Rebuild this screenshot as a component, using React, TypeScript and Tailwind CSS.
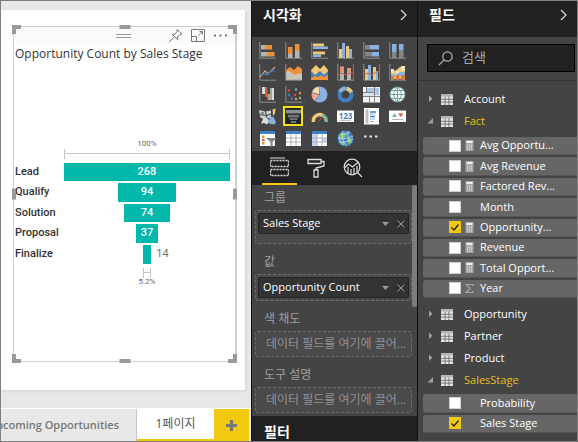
import type { ReactNode } from "react";
import clsx from "clsx";

const OR = "#ee8f3a";
const GR = "#b4b4b4";
const DG = "#858585";
const BL = "#8ab0de";
const DB = "#3f7fc4";
const YE = "#f0c878";
const RE = "#d9553f";
const TE = "#7db795";

function Axes() {
  return <path d="M.8 0V16.2H17" fill="none" stroke="#8f8f8f" strokeWidth="1" />;
}

function Globe({ fill, line }: { fill: string; line: string }) {
  return (
    <>
      <circle cx="8.5" cy="8.5" r="7.6" fill={fill} stroke={line} strokeWidth=".8" />
      <path d="M1 8.5h15M8.5 1v15M2.5 4.6h12M2.5 12.4h12M8.5 1c-5 4.5-5 10.500 0 15M8.500 1c5 4.500 5 10.500 0 15" fill="none" stroke={line} strokeWidth=".9" />
    </>
  );
}

function Sheet({ tint }: { tint?: boolean }) {
  return (
    <>
      <path d="M1 1h15v15H1z" fill="#fff" />
      <path d="M1 1h15v3H1z" fill={DB} />
      {tint && <path d="M1 4h5v12H1zM11 8h5v4h-5z" fill="#c3d9f0" />}
      <path d="M6 4v12M11 4v12M1 8h15M1 12h15" stroke="#a9a9a9" strokeWidth=".9" />
    </>
  );
}

const visuals: { name: string; art: ReactNode; selected?: boolean }[] = [
  {
    name: "Stacked bar chart",
    art: (
      <>
        <Axes />
        <path d="M2 3h4v4.500H2zM2 10h6v4.500H2z" fill={GR} />
        <path d="M6 3h7v4.500H6zM8 10h7.500v4.500H8z" fill={OR} />
      </>
    ),
  },
  {
    name: "Stacked column chart",
    art: (
      <>
        <Axes />
        <path d="M3 12h4.500v4H3zM10 9h4.500v7H10z" fill={GR} />
        <path d="M3 5h4.500v7H3zM10 2h4.500v7H10z" fill={OR} />
      </>
    ),
  },
  {
    name: "Clustered bar chart",
    art: (
      <>
        <Axes />
        <path d="M2 1.500h11v3H2zM2 9.500h12v3H2z" fill={YE} />
        <path d="M2 4.500h15v2.500H2zM2 12.500h8v2.500H2z" fill={BL} />
      </>
    ),
  },
  {
    name: "Clustered column chart",
    art: (
      <>
        <Axes />
        <path d="M2 7h3v9H2zM9 4h3v12H9z" fill={YE} />
        <path d="M5 1h3v15H5zM12 7h3v9h-3z" fill={BL} />
      </>
    ),
  },
  {
    name: "100% stacked bar chart",
    art: (
      <>
        <Axes />
        <path d="M2 3h5v4.500H2zM2 10h7v4.500H2z" fill={DG} />
        <path d="M7 3h9v4.500H7zM9 10h7v4.500H9z" fill={BL} />
      </>
    ),
  },
  {
    name: "100% stacked column chart",
    art: (
      <>
        <Axes />
        <path d="M3 10h4.500v6H3zM10 8h4.500v8H10z" fill={DG} />
        <path d="M3 2h4.500v8H3zM10 2h4.500v6H10z" fill={BL} />
      </>
    ),
  },
  {
    name: "Line chart",
    art: (
      <>
        <Axes />
        <path d="M1 13l5-6 3 3 7-7" fill="none" stroke="#d49a8b" strokeWidth="1.200" />
        <path d="M1 11l4-1 3 1 4-4h4" fill="none" stroke={DB} strokeWidth="1.200" />
      </>
    ),
  },
  {
    name: "Area chart",
    art: (
      <>
        <path d="M1 6l4-3 4 3 4-4 4 3v11H1z" fill={OR} />
        <path d="M1 8l3-1 6 4 4-2 3 1v6H1z" fill="#c9c3b8" />
        <Axes />
      </>
    ),
  },
  {
    name: "Stacked area chart",
    art: (
      <>
        <path d="M0 6l5-5 4 4 4-4 4 5v6H0z" fill={YE} />
        <path d="M0 7l4 4 5-4 4 4 4-4v9H0z" fill={DB} />
        <path d="M0 14l4-2 3 1 3-2 3 2 4-2v5H0z" fill={OR} />
      </>
    ),
  },
  {
    name: "Line and stacked column chart",
    art: (
      <>
        <Axes />
        <path d="M3 8h4v8H3zM10 7h4v9h-4z" fill={GR} />
        <path d="M3 2.500h4V8H3zM10 4h4v4h-4z" fill="#e0956f" />
        <path d="M1 11l4-2 4 2 4-2h3M16.400 0v16" fill="none" stroke={RE} />
      </>
    ),
  },
  {
    name: "Line and clustered column chart",
    art: (
      <>
        <Axes />
        <path d="M2 5h3v11H2zM10 3h3v13h-3z" fill={YE} />
        <path d="M5 1h3v15H5zM13 7h2v9h-2z" fill={BL} />
        <path d="M1 11l4-2 4 2 4-3h3M16.400 0v16" fill="none" stroke="#c06a3b" />
      </>
    ),
  },
  {
    name: "Ribbon chart",
    art: (
      <>
        <path d="M2 5l4 2 5-4h5v12H2z" fill={YE} />
        <path d="M2 5h3v4H2zM7 7h3v4H7zM12 2h4v5h-4z" fill="#f8e6c2" />
        <path d="M2 9l4 2 5-3h5v3L9 13l-7-1z" fill={BL} />
        <path d="M2 12h3v4H2zM7 11h3v5H7zM12 11h4v5h-4z" fill="#e0753a" />
        <Axes />
      </>
    ),
  },
  {
    name: "Waterfall chart",
    art: (
      <>
        <Axes />
        <path d="M3 1h3v7H3zM13 2h2v12h-2z" fill="#dadada" />
        <path d="M6 1h2.500v10H6z" fill={RE} />
        <path d="M8.500 8H11v6H8.500z" fill="#e0956f" />
        <path d="M11 2h2v12h-2z" fill={TE} />
      </>
    ),
  },
  {
    name: "Scatter chart",
    art: (
      <>
        <Axes />
        <g fill={RE}><circle cx="4" cy="4.500" r="1.200" /><circle cx="10" cy="9" r="1.200" /></g>
        <g fill={TE}><circle cx="11" cy="3.500" r="1.200" /><circle cx="15" cy="12" r="1.200" /></g>
        <g fill={DB}><circle cx="4" cy="9" r="1.200" /><circle cx="7" cy="12.500" r="1.200" /></g>
        <g fill={OR}><circle cx="15" cy="7" r="1.200" /><circle cx="11" cy="13" r="1.200" /></g>
      </>
    ),
  },
  {
    name: "Pie chart",
    art: (
      <>
        <circle cx="8.500" cy="8.500" r="8" fill={BL} />
        <path d="M8.500 8.500L.8 6.500A8 8 0 0 0 4 15.100z" fill="#f0a898" stroke="#444" strokeWidth=".4" />
        <path d="M8.500 8.500L.8 6.500A8 8 0 0 1 8.500.5z" fill="#f3dcae" stroke="#444" strokeWidth=".4" />
      </>
    ),
  },
  {
    name: "Donut chart",
    art: (
      <>
        <circle cx="8.500" cy="8.500" r="6" fill="none" stroke={DB} strokeWidth="4" />
        <path d="M3 6a6 6 0 0 1 5.500-3.500" fill="none" stroke={BL} strokeWidth="4" />
        <path d="M9.500 2.600a6 6 0 0 1 4.600 3.800" fill="none" stroke={YE} strokeWidth="4" />
      </>
    ),
  },
  {
    name: "Treemap",
    art: (
      <>
        <path d="M0 1h17v15.500H0z" fill="#f5f5f5" />
        <path d="M4 2h7v4H4zM12 2h4v7h-4z" fill="#a9c6e4" />
        <path d="M0 7h11v3H0z" fill="#d5e4f3" />
        <path d="M11.500 1v15.500M0 10.500h17M6.500 10.500v6M0 6.500h11.500M3.500 1v5.500" stroke="#777" strokeWidth=".9" />
      </>
    ),
  },
  { name: "Map", art: <Globe fill="#fff" line="#5a9c94" /> },
  {
    name: "Filled map",
    art: (
      <>
        <path d="M0 2l6 1.500 6-1V9l-3 2-5 0-3-2z" fill="#cfcfcf" />
        <path d="M2 4h3v2H2z" fill="#8a8a8a" />
        <path d="M4 11l5-.500 1 3-2 3-3-1.500-3 .5z" fill="#dcdcdc" />
        <path d="M10.500 8.500l4 .500 2.500 5-1.500 2.500-6-1z" fill={BL} />
        <path d="M13.500 1.500l3-1-.500 5-2 2.500z" fill={YE} />
        <path d="M0 6.500l8 1 5-2M6.500 3l1 6 3 3" fill="none" stroke="#444" />
      </>
    ),
  },
  {
    name: "Funnel",
    selected: true,
    art: (
      <>
        <path d="M0 1h17v4H0z" fill="#8f8f8f" />
        <path d="M2 6.500h13v3H2zM4 10.500h9v2H4zM5.500 13.500h6v2.500h-6z" fill="#777" />
      </>
    ),
  },
  {
    name: "Gauge",
    art: (
      <>
        <path d="M2.500 14a6.200 6.200 0 0 1 9-6.600" fill="none" stroke={YE} strokeWidth="3.500" />
        <path d="M11.500 7.400A6.200 6.200 0 0 1 15 14" fill="none" stroke={TE} strokeWidth="3.500" />
        <path d="M8 13l2-3" stroke={RE} />
      </>
    ),
  },
  {
    name: "Card",
    art: (
      <>
        <path d="M0 2.500h17v11.500H0z" fill="#fff" />
        <text x="8.500" y="10.500" textAnchor="middle" fontSize="8" fontWeight="700" fill={DB}>123</text>
        <path d="M3 12.300h11" stroke={GR} />
      </>
    ),
  },
  {
    name: "Multi-row card",
    art: (
      <>
        <path d="M1 0h15v16.500H1z" fill="#fff" />
        <path d="M2.500 1.500h3v14h-3z" fill="#bdbdbd" />
        <path d="M7 4h6M7 8.500h5" stroke={DB} strokeWidth="1.500" />
        <path d="M7 6h4M7 11h5M7 13.500h4" stroke={BL} />
      </>
    ),
  },
  {
    name: "KPI",
    art: (
      <>
        <path d="M0 2.500h17v11.500H0z" fill="#fff" />
        <path d="M3 9l2.500-4L8 9z" fill={TE} />
        <path d="M9 5.500h5.500L11.800 9z" fill={RE} />
        <path d="M3 11.500h11" stroke={GR} />
      </>
    ),
  },
  {
    name: "Slicer",
    art: (
      <>
        <path d="M1 1h15v15H1z" fill="#fff" />
        <path d="M1 1h15v3H1z" fill={DB} />
        <path d="M3 5.500h2.500V8H3zM3 12h2.500v2.500H3z" fill={OR} />
        <path d="M3 9h2.500v2H3z" fill={RE} />
        <path d="M7 8h10.500l-4 4v4l-2 1.500V12z" fill="#858585" />
      </>
    ),
  },
  { name: "Table", art: <Sheet /> },
  { name: "Matrix", art: <Sheet tint /> },
  {
    name: "ArcGIS map",
    art: (
      <>
        <circle cx="8.500" cy="8.500" r="8" fill={DB} />
        <path d="M3 4l5-2 2 4-4 3-3 0zM10 9l4-1 1 4-4 3zM4 11l3 1 1 3-3 0z" fill="#6fc06b" />
        <path d="M1 8c5 2 11 0 15-2M2 12c5 1 10-1 14-3M3 4c4 1 7 0 10-2M6 1c-2 5 0 11 4 15M11 1c-1 5 1 9 3 12M2 5c0 4 2 8 4 10" fill="none" stroke="#d2e3ea" strokeWidth=".8" />
      </>
    ),
  },
  {
    name: "More visuals",
    art: <path d="M1 5.500h2.500v2H1zM6.500 5.500h2.500v2H6.500zM12 5.500h2.500v2H12z" fill="#e4e4e4" />,
  },
];

const stages = [
  { name: "Lead", count: 268 },
  { name: "Qualify", count: 94 },
  { name: "Solution", count: 74 },
  { name: "Proposal", count: 37 },
  { name: "Finalize", count: 14 },
];
const top = stages[0].count;

function Bracket({ width }: { width: number }) {
  return (
    <div className="mx-auto flex h-[10px] items-center border-x border-[#c4c4c4]" style={{ width: `${width}%` }}>
      <div className="h-px w-full bg-[#c4c4c4]" />
    </div>
  );
}

function Funnel() {
  return (
    <div className="flex flex-1 flex-col justify-center pr-[5px] pl-px font-['Roboto','Liberation_Sans',sans-serif]">
      <div className="pl-[49px] text-center text-[8px] leading-[10px] text-[#666]">
        100%
        <Bracket width={100} />
      </div>
      <ul className="mt-[4px] grid h-[101px] auto-rows-fr gap-[2px]">
        {stages.map((s) => {
          const small = s.count / top < 0.1;
          return (
            <li key={s.name} className="flex items-stretch">
              <span className="flex w-[49px] items-center text-[11px] font-medium text-[#333]">{s.name}</span>
              <div className="flex flex-1">
                <span className="flex-1 basis-0" />
                <span
                  className="flex items-center justify-center bg-[#01b8aa] text-[11px] font-medium text-white"
                  style={{ width: `${(s.count / top) * 100}%` }}
                >
                  {!small && s.count}
                </span>
                <span className="flex flex-1 basis-0 items-center text-[11px] text-[#777]">
                  {small && <span className="ml-[5px]">{s.count}</span>}
                </span>
              </div>
            </li>
          );
        })}
      </ul>
      <div className="mt-[4px] pl-[49px] text-center text-[8px] leading-[8px] text-[#666]">
        <Bracket width={(stages[4].count / top) * 100} />
        5.2%
      </div>
    </div>
  );
}

const handles = [
  "-top-[2px] -left-[2px] h-[9px] w-[9px] border-t-[4px] border-l-[4px]",
  "-top-[2px] -right-[2px] h-[9px] w-[9px] border-t-[4px] border-r-[4px]",
  "-bottom-[2px] -left-[2px] h-[9px] w-[9px] border-b-[4px] border-l-[4px]",
  "-bottom-[2px] -right-[2px] h-[9px] w-[9px] border-b-[4px] border-r-[4px]",
  "-top-[2px] left-1/2 h-[4px] w-[11px] -translate-x-1/2 border-t-[4px]",
  "-bottom-[2px] left-1/2 h-[4px] w-[11px] -translate-x-1/2 border-t-[4px]",
  "-left-[2px] top-1/2 h-[11px] w-[4px] -translate-y-1/2 border-l-[4px]",
  "-right-[2px] top-1/2 h-[11px] w-[4px] -translate-y-1/2 border-l-[4px]",
];

function ReportCanvas() {
  return (
    <main className="flex min-w-0 flex-1 flex-col bg-[#e8e8e8]">
      <div className="mt-[9px] mr-[6px] mb-[18px] flex flex-1 bg-white pt-[16px] pr-[8px] pb-[28px] pl-[12px] shadow-[1px_1px_3px_#d0d0d0]">
        <section className="relative flex flex-1 flex-col border border-r-2 border-[#cfcfcf]">
          {handles.map((h) => (
            <span key={h} className={clsx("absolute border-[#999]", h)} />
          ))}
          <div className="flex h-[17px] items-center justify-end gap-[8px] bg-[#fafafa] pr-[7px] text-[#777]">
            <span className="mr-[29px] h-[4px] w-[15px] border-y border-[#999]" />
            <button aria-label="Pin visual">
              <svg width="15" height="15" viewBox="0 0 15 15" fill="none" stroke="currentColor" className="block">
                <path d="M9 1.500l5 4.500-2 .5-2.500 2.500.2 2.500L4 6.500l2.800-.3L9 3.700zM6.500 8.800L1 14" />
              </svg>
            </button>
            <button aria-label="Focus mode">
              <svg width="14" height="13" viewBox="0 0 14 13" fill="none" stroke="currentColor" className="block">
                <path d="M.5.5h13v12H.5zM.5 7.500h5v5M7.500 6.500l4-4M8.500 2.500h3v3" />
              </svg>
            </button>
            <button aria-label="More options">
              <svg width="15" height="13" viewBox="0 0 15 13" fill="currentColor" className="block">
                <path d="M1 5.500h2v2H1zM6.500 5.500h2v2h-2zM12 5.500h2v2h-2z" />
              </svg>
            </button>
          </div>
          <h2 className="pt-px pl-px text-[12px] leading-[18px] whitespace-nowrap text-[#333]">Opportunity Count by Sales Stage</h2>
          <Funnel />
        </section>
      </div>
      <nav className="flex h-[33px] border-t border-white text-[12px] text-[#777]">
        <button className="flex min-w-0 flex-1 items-center justify-end overflow-hidden border-r border-[#c4c4c4] pr-[17px] text-[11px] font-semibold whitespace-nowrap">
          Upcoming Opportunities
        </button>
        <button className="w-[77px] border-b-2 border-[#f2c811] bg-white text-[#555]">1페이지</button>
        <button aria-label="Add page" className="mr-[2px] flex w-[35px] items-center justify-center bg-[#f2c811]">
          <svg width="11" height="11" viewBox="0 0 11 11" stroke="#777" strokeWidth="3">
            <path d="M5.500 0v11M0 5.500h11" />
          </svg>
        </button>
      </nav>
    </main>
  );
}

function PaneHeader({ title }: { title: string }) {
  return (
    <header className="flex h-[36px] shrink-0 items-center justify-between bg-[#212121] pr-[4px] pb-[9px] pl-[11px] text-[14px] font-bold text-white">
      <h2>{title}</h2>
      <button aria-label={`${title} 축소`} className="mr-[6px]">
        <svg width="7" height="12" viewBox="0 0 7 12" fill="none" stroke="#d8d8d8" strokeWidth="1.300" className="block">
          <path d="M1 1l5 5-5 5" />
        </svg>
      </button>
    </header>
  );
}

function Well({ label, field, roomy }: { label: string; field?: string; roomy?: boolean }) {
  return (
    <div>
      <h3 className="flex h-[25px] items-center pl-[9px] text-[12px] text-[#a0a0a0]">{label}</h3>
      <div className={clsx("rounded-[3px] border border-dashed border-[#6c6c6c] bg-[#4a4a4a]", roomy && "pb-[7px]")}>
        {field ? (
          <div className="m-[2px] flex h-[21px] items-center rounded-[2px] border border-[#242424] bg-[#333] pr-[3px] pl-[4px]">
            <span className="flex-1 text-[11px] whitespace-nowrap text-white">{field}</span>
            <button aria-label={`${field} 옵션`} className="mr-[8px]">
              <svg width="7" height="4" viewBox="0 0 7 4" className="block"><path d="M0 0h7L3.500 4z" fill="#999" /></svg>
            </button>
            <button aria-label={`${field} 제거`}>
              <svg width="8" height="8" viewBox="0 0 8 8" className="block"><path d="M.5.5l7 7M7.500.5l-7 7" stroke="#999" /></svg>
            </button>
          </div>
        ) : (
          <p className="flex h-[24px] items-center pl-[10px] text-[12px] whitespace-nowrap text-[#929292]">데이터 필드를 여기에 끌어...</p>
        )}
      </div>
    </div>
  );
}

function VisualizationsPane() {
  return (
    <aside className="flex w-[167px] shrink-0 flex-col border-x border-[#111] bg-[#444]">
      <PaneHeader title="시각화" />
      <div className="grid grid-cols-6 gap-y-[2px] pt-[3px] pr-[4px] pb-[3px] pl-[5px]">
        {visuals.map((v) => (
          <button
            key={v.name}
            aria-label={v.name}
            className={clsx("flex size-[20px] items-center justify-center", v.selected && "border-2 border-[#f5e11c] bg-[#222]")}
          >
            <svg width="17" height="17" viewBox="0 0 17 17" className={clsx("block shrink-0", v.selected && "p-px")}>{v.art}</svg>
          </button>
        ))}
      </div>
      <div className="flex h-[34px] shrink-0 bg-[#212121] pl-[10px] text-[#ddd]">
        <button aria-label="필드" className="flex w-[35px] items-center justify-center border-b-2 border-[#f2c811]">
          <svg width="19" height="20" viewBox="0 0 19 20" fill="none" stroke="currentColor">
            <path d="M0 1h15" />
            <path d="M.5 3.500h18v6H.5zM.5 12.500h18v6H.5z" strokeDasharray="2 1" strokeWidth="1.400" />
          </svg>
        </button>
        <button aria-label="서식" className="flex w-[38px] items-center justify-center">
          <svg width="18" height="20" viewBox="0 0 18 20" fill="none" stroke="currentColor" strokeWidth="1.300">
            <path d="M1 1.500h13v4H1zM14 3.500h3v4.500l-8 2v2M7 12h4v7H7z" />
          </svg>
        </button>
        <button aria-label="분석" className="flex w-[36px] items-center justify-center">
          <svg width="20" height="20" viewBox="0 0 20 20" fill="none" stroke="currentColor" strokeWidth="1.200">
            <circle cx="9" cy="9" r="7.800" />
            <path d="M14.500 14.500l4.500 4.500M1.500 10l4-4 4 3 6-5M5 9v6M8 11v5M11 10v6M14 8v6" />
          </svg>
        </button>
      </div>
      <div className="flex">
        <div className="flex min-w-0 flex-1 flex-col gap-[5px] pb-[3px] pl-[3px]">
          <Well label="그룹" field="Sales Stage" roomy />
          <Well label="값" field="Opportunity Count" />
          <Well label="색 채도" />
          <Well label="도구 설명" />
        </div>
        <div className="h-[122px] w-[5px] rounded-[2px] bg-[#7c7c7c]" />
      </div>
      <h2 className="flex-1 bg-[#212121] pt-[7px] pl-[12px] text-[14px] leading-[18px] font-bold text-white">필터</h2>
    </aside>
  );
}

type Field = { name: string; kind?: "calc" | "sum"; checked?: boolean };

const tables: { name: string; fields?: Field[] }[] = [
  { name: "Account" },
  {
    name: "Fact",
    fields: [
      { name: "Avg Opportu...", kind: "calc" },
      { name: "Avg Revenue", kind: "calc" },
      { name: "Factored Rev...", kind: "calc" },
      { name: "Month" },
      { name: "Opportunity...", kind: "calc", checked: true },
      { name: "Revenue", kind: "calc" },
      { name: "Total Opport...", kind: "calc" },
      { name: "Year", kind: "sum" },
    ],
  },
  { name: "Opportunity" },
  { name: "Partner" },
  { name: "Product" },
  { name: "SalesStage", fields: [{ name: "Probability" }, { name: "Sales Stage", checked: true }] },
];

function KindIcon({ kind }: { kind?: "calc" | "sum" }) {
  return (
    <svg width="9" height="11" viewBox="0 0 9 11" className="block">
      {kind === "calc" && (
        <>
          <path d="M.5 0h8v11h-8z" fill="#a5a5a5" />
          <path d="M1.500 1h6v2h-6z" fill="#f0f0f0" />
          <path d="M2 5h5M2 7h5M2 9h5" stroke="#e8e8e8" strokeDasharray="1 1" />
        </>
      )}
      {kind === "sum" && <path d="M8 3V1.500H1l4 4-4 4h7V8" fill="none" stroke="#a8a8a8" strokeWidth="1.200" />}
    </svg>
  );
}

function FieldRow({ field }: { field: Field }) {
  return (
    <li className="flex rounded-l-[3px] border-b border-[#555] bg-[#666]">
      <label className="flex flex-1 items-center pl-[26px] text-[11px] text-white">
        <span className="grid size-[12px] place-items-center">
          <input
            type="checkbox"
            defaultChecked={field.checked}
            className="peer col-start-1 row-start-1 size-[12px] appearance-none border border-[#d0d0d0] bg-white checked:border-[#f2c811] checked:bg-[#f2c811]"
          />
          <svg width="8" height="7" viewBox="0 0 8 7" fill="none" stroke="#222" strokeWidth="1.300" className="pointer-events-none col-start-1 row-start-1 hidden peer-checked:block">
            <path d="M.5 3.500L3 6l4.500-5.500" />
          </svg>
        </span>
        <span className="mr-[6px] ml-[4px]"><KindIcon kind={field.kind} /></span>
        <span className="whitespace-nowrap">{field.name}</span>
      </label>
    </li>
  );
}

function FieldsPane() {
  return (
    <aside className="w-[159px] shrink-0 bg-[#444]">
      <PaneHeader title="필드" />
      <div className="border-b border-[#333] pt-[7px] pr-[2px] pb-[8px] pl-[9px]">
        <label className="flex h-[28px] items-center border border-black bg-[#212121] pl-[10px]">
          <svg width="15" height="15" viewBox="0 0 15 15" fill="none" stroke="#b0b0b0" strokeWidth="1.200" className="shrink-0">
            <circle cx="9.500" cy="5.500" r="4.700" />
            <path d="M6 9L.8 14.200" />
          </svg>
          <input aria-label="검색" placeholder="검색" className="ml-[9px] w-full min-w-0 bg-transparent text-[13px] outline-none placeholder:text-[#a6a6a6]" />
        </label>
      </div>
      <ul className="pt-[7px]">
        {tables.map((t) => (
          <li key={t.name}>
            <button className="flex h-[22px] w-full items-center pl-[9px]">
              <svg width="7" height="8" viewBox="0 0 7 8" fill="#a0a0a0">
                <path d={t.fields ? "M6 1v5.500H.5z" : "M2 .5v6.500l3.500-3.200z"} />
              </svg>
              <svg width="12" height="11" viewBox="0 0 12 11" className="mr-[11px] ml-[7px]">
                <path d="M0 0h12v11H0z" fill="#e2e2e2" />
                <path d="M0 0h12v2.500H0z" fill="#b5b5b5" />
                <path d="M4.100 2.500V11M7.900 2.500V11M0 5.300h12M0 8.100h12" stroke="#666" strokeWidth=".8" />
              </svg>
              <span className={clsx("text-[11px]", t.fields ? "text-[#e8c11a]" : "text-white")}>{t.name}</span>
            </button>
            {t.fields && (
              <ul className={clsx("grid auto-rows-fr gap-[2px] pl-[5px]", t.fields.length > 4 ? "mt-[5px] mb-[5px] h-[161px]" : "mt-[3px] h-[39px]")}>
                {t.fields.map((f) => (
                  <FieldRow key={f.name} field={f} />
                ))}
              </ul>
            )}
          </li>
        ))}
      </ul>
    </aside>
  );
}

export default function App() {
  return (
    <div className="flex h-screen overflow-hidden border border-[#7f7f7f] font-['Open_Sans','Noto_Sans_CJK_KR',sans-serif]">
      <ReportCanvas />
      <VisualizationsPane />
      <FieldsPane />
    </div>
  );
}
